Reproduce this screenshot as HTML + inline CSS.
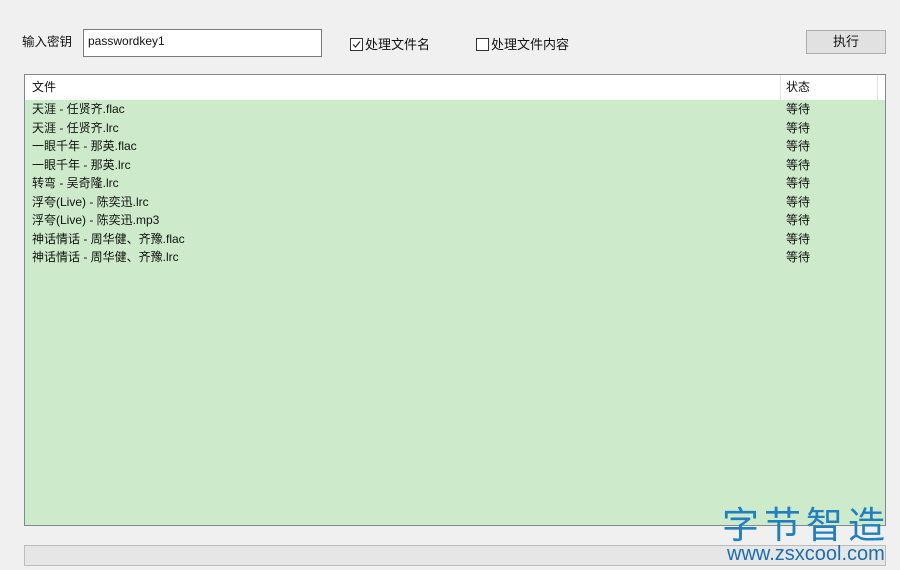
<!DOCTYPE html>
<html><head><meta charset="utf-8"><style>
body{margin:0;width:900px;height:570px;background:#f0f0f0;font-family:"Liberation Sans","Noto Sans CJK SC",sans-serif;font-size:12px;color:#111;position:relative;overflow:hidden}
.a{position:absolute}
.cb{display:inline-block;width:11px;height:11px;border:1px solid #333;background:#fff;vertical-align:-2px;margin-right:2px;position:relative}
.row{height:18.5px;line-height:18.5px;position:relative}
.row span{position:absolute;left:786px;top:0}
</style></head><body>
<div class="a" style="left:22px;top:31px;font-size:12.5px">输入密钥</div>
<div class="a" style="left:83px;top:29px;width:237px;height:26px;background:#fff;border:1px solid #7a7a7a;box-sizing:content-box"><div style="padding:4px 4px;font-size:12px">passwordkey1</div></div>
<div class="a" style="left:350px;top:34px;font-size:13px"><span class="cb"><svg width="11" height="11" style="position:absolute;left:0;top:0"><path d="M2 5.5 L4.5 8 L9 2.5" stroke="#222" stroke-width="1.2" fill="none"/></svg></span>处理文件名</div>
<div class="a" style="left:476px;top:34px;font-size:13px"><span class="cb"></span>处理文件内容</div>
<div class="a" style="left:806px;top:30px;width:78px;height:22px;background:#e1e1e1;border:1px solid #adadad;text-align:center;line-height:22px;font-size:13px">执行</div>
<div class="a" style="left:24px;top:74px;width:860px;height:450px;border:1px solid #828790;background:#cdeacb">
<div style="height:25px;background:#fff;line-height:25px;position:relative"><span style="position:absolute;left:7px">文件</span><span style="position:absolute;left:761px">状态</span><div style="position:absolute;left:755px;top:0;width:1px;height:25px;background:#e5e5e5"></div><div style="position:absolute;left:852px;top:0;width:1px;height:25px;background:#e5e5e5"></div></div>
<div style="padding-left:7px">
<div class="row">天涯 - 任贤齐.flac<span style="left:754px">等待</span></div>
<div class="row">天涯 - 任贤齐.lrc<span style="left:754px">等待</span></div>
<div class="row">一眼千年 - 那英.flac<span style="left:754px">等待</span></div>
<div class="row">一眼千年 - 那英.lrc<span style="left:754px">等待</span></div>
<div class="row">转弯 - 吴奇隆.lrc<span style="left:754px">等待</span></div>
<div class="row">浮夸(Live) - 陈奕迅.lrc<span style="left:754px">等待</span></div>
<div class="row">浮夸(Live) - 陈奕迅.mp3<span style="left:754px">等待</span></div>
<div class="row">神话情话 - 周华健、齐豫.flac<span style="left:754px">等待</span></div>
<div class="row">神话情话 - 周华健、齐豫.lrc<span style="left:754px">等待</span></div>
</div></div>
<div class="a" style="left:24px;top:545px;width:860px;height:19px;background:#e6e6e6;border:1px solid #bcbcbc"></div>
<div class="a" style="left:722px;top:500px;font-size:37px;color:#1f7fc0;letter-spacing:5px;font-family:'Noto Sans CJK SC',sans-serif;line-height:44px">字节智造</div>
<div class="a" style="left:727px;top:543px;font-size:20px;color:#1a6fb0;line-height:22px">www.zsxcool.com</div>
</body></html>
